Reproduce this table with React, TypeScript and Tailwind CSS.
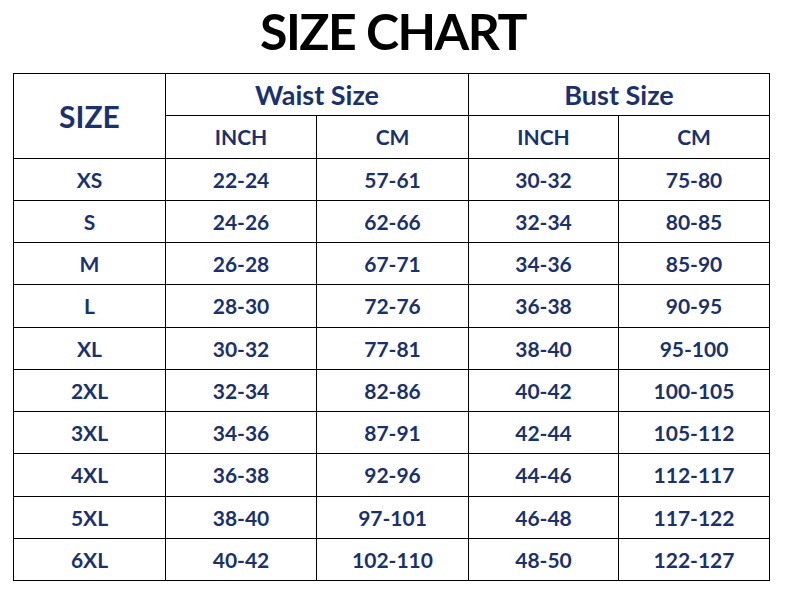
import React from "react";

const rows: string[][] = [
  ["XS", "22-24", "57-61", "30-32", "75-80"],
  ["S", "24-26", "62-66", "32-34", "80-85"],
  ["M", "26-28", "67-71", "34-36", "85-90"],
  ["L", "28-30", "72-76", "36-38", "90-95"],
  ["XL", "30-32", "77-81", "38-40", "95-100"],
  ["2XL", "32-34", "82-86", "40-42", "100-105"],
  ["3XL", "34-36", "87-91", "42-44", "105-112"],
  ["4XL", "36-38", "92-96", "44-46", "112-117"],
  ["5XL", "38-40", "97-101", "46-48", "117-122"],
  ["6XL", "40-42", "102-110", "48-50", "122-127"],
];

export default function App() {
  const cell = "border border-black text-center align-middle p-0";
  return (
    <div
      className="w-[786px] h-[594px] bg-white overflow-hidden"
      style={{ fontFamily: "Lato, 'Open Sans', sans-serif" }}
    >
      <div className="h-[73px] pt-[6px] text-center text-[50px] leading-none font-bold tracking-[-1.5px] text-black">
        SIZE CHART
      </div>
      <table className="ml-[13px] w-[757px] border-collapse table-fixed font-bold text-[#19326f]">
        <colgroup>
          <col className="w-[152px]" />
          <col className="w-[151px]" />
          <col className="w-[152px]" />
          <col className="w-[150px]" />
          <col className="w-[151px]" />
        </colgroup>
        <tbody>
          <tr className="h-[42.25px]">
            <td rowSpan={2} className={`${cell} text-[30px] leading-none`}>
              SIZE
            </td>
            <td colSpan={2} className={`${cell} text-[27px] leading-none`}>
              Waist Size
            </td>
            <td colSpan={2} className={`${cell} text-[27px] leading-none`}>
              Bust Size
            </td>
          </tr>
          <tr className="h-[42.25px] text-[21px] leading-none">
            <td className={cell}>INCH</td>
            <td className={cell}>CM</td>
            <td className={cell}>INCH</td>
            <td className={cell}>CM</td>
          </tr>
          {rows.map((r) => (
            <tr key={r[0]} className="h-[42.25px] text-[21px] leading-none">
              {r.map((v, i) => (
                <td key={i} className={cell}>
                  {v}
                </td>
              ))}
            </tr>
          ))}
        </tbody>
      </table>
    </div>
  );
}
